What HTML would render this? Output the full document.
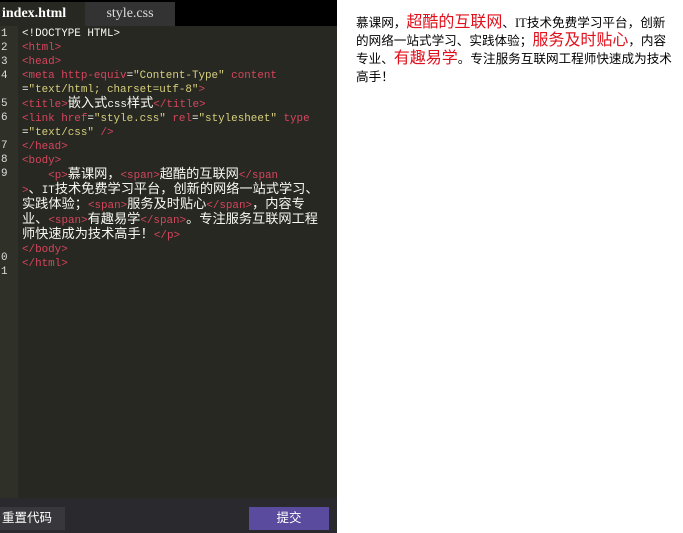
<!DOCTYPE html>
<html><head><meta charset="utf-8"><style>
body{margin:0;width:683px;height:533px;overflow:hidden;background:#fff;font-family:"Liberation Sans","Noto Sans CJK SC",sans-serif;position:relative}
#left{position:absolute;left:0;top:0;width:337px;height:533px;background:#1e1e1e}
#tabs{position:absolute;left:0;top:0;width:337px;height:26px;background:#000}
.tab{position:absolute;top:2px;height:24px;line-height:24px;font-family:"Liberation Serif","Noto Serif CJK SC",serif;font-size:14px;color:#fff}
#t1{left:0;width:85px;background:#272822;font-weight:bold;padding-left:2px;box-sizing:border-box}
#t2{left:85px;width:90px;background:#333;color:#ddd;text-align:center}
#code{position:absolute;left:0;top:26px;width:337px;height:472px;background:#272822}
#gut{position:absolute;left:0;top:0;width:18px;height:472px;background:#2f3129}
pre{margin:0;position:absolute;top:0;font-family:"Liberation Mono","Noto Sans CJK SC",monospace;font-size:10.9px;line-height:14px;color:#f8f8f2}
#nums{left:1px;color:#ddd}
#src{left:22px;white-space:pre}
i{font-style:normal;font-size:13.2px;line-height:14px}
.t{color:#d6455d}.s{color:#d7cf7e}
#bot{position:absolute;left:0;top:498px;width:337px;height:35px;background:#2a2a2e}
.btn{position:absolute;top:9px;height:23px;line-height:23px;font-size:12.5px;color:#fff;text-align:center}
#r{left:0;width:65px;background:#38383c;text-align:left;padding-left:2px;box-sizing:border-box}
#s{left:249px;width:80px;background:#5a4b9e}
#right{position:absolute;left:356px;top:14px;white-space:nowrap;font-family:"Liberation Serif","Noto Sans CJK SC",sans-serif;font-size:12.6px;line-height:18px;color:#000}
#right span{color:#e0101c;font-size:16px}
</style></head><body>
<div id="left">
<div id="tabs"><div class="tab" id="t1">index.html</div><div class="tab" id="t2">style.css</div></div>
<div id="code"><div id="gut"></div>
<pre id="nums" style="top:1px">1
2
3
4

5
6

7
8
9





0
1</pre>
<pre id="src" style="top:1px">&lt;!DOCTYPE HTML&gt;
<span class="t">&lt;html&gt;</span>
<span class="t">&lt;head&gt;</span>
<span class="t">&lt;meta http-equiv</span>=<span class="s">"Content-Type"</span> <span class="t">content</span>
=<span class="s">"text/html; charset=utf-8"</span><span class="t">&gt;</span>
<span class="t">&lt;title&gt;</span><i>嵌入式</i>css<i>样式</i><span class="t">&lt;/title&gt;</span>
<span class="t">&lt;link href</span>=<span class="s">"style.css"</span> <span class="t">rel</span>=<span class="s">"stylesheet"</span> <span class="t">type</span>
=<span class="s">"text/css"</span> <span class="t">/&gt;</span>
<span class="t">&lt;/head&gt;</span>
<span class="t">&lt;body&gt;</span>
    <span class="t">&lt;p&gt;</span><i>慕课网，</i><span class="t">&lt;span&gt;</span><i>超酷的互联网</i><span class="t">&lt;/span</span>
<span class="t">&gt;</span><i>、</i>IT<i>技术免费学习平台，创新的网络一站式学习、</i>
<i>实践体验；</i><span class="t">&lt;span&gt;</span><i>服务及时贴心</i><span class="t">&lt;/span&gt;</span><i>，内容专</i>
<i>业、</i><span class="t">&lt;span&gt;</span><i>有趣易学</i><span class="t">&lt;/span&gt;</span><i>。专注服务互联网工程</i>
<i>师快速成为技术高手！</i><span class="t">&lt;/p&gt;</span>
<span class="t">&lt;/body&gt;</span>
<span class="t">&lt;/html&gt;</span></pre>
</div>
<div id="bot"><div class="btn" id="r">重置代码</div><div class="btn" id="s">提交</div></div>
</div>
<div id="right">慕课网，<span>超酷的互联网</span>、IT技术免费学习平台，创新<br>的网络一站式学习、实践体验；<span>服务及时贴心</span>，内容<br>专业、<span>有趣易学</span>。专注服务互联网工程师快速成为技术<br>高手！</div>
</body></html>
